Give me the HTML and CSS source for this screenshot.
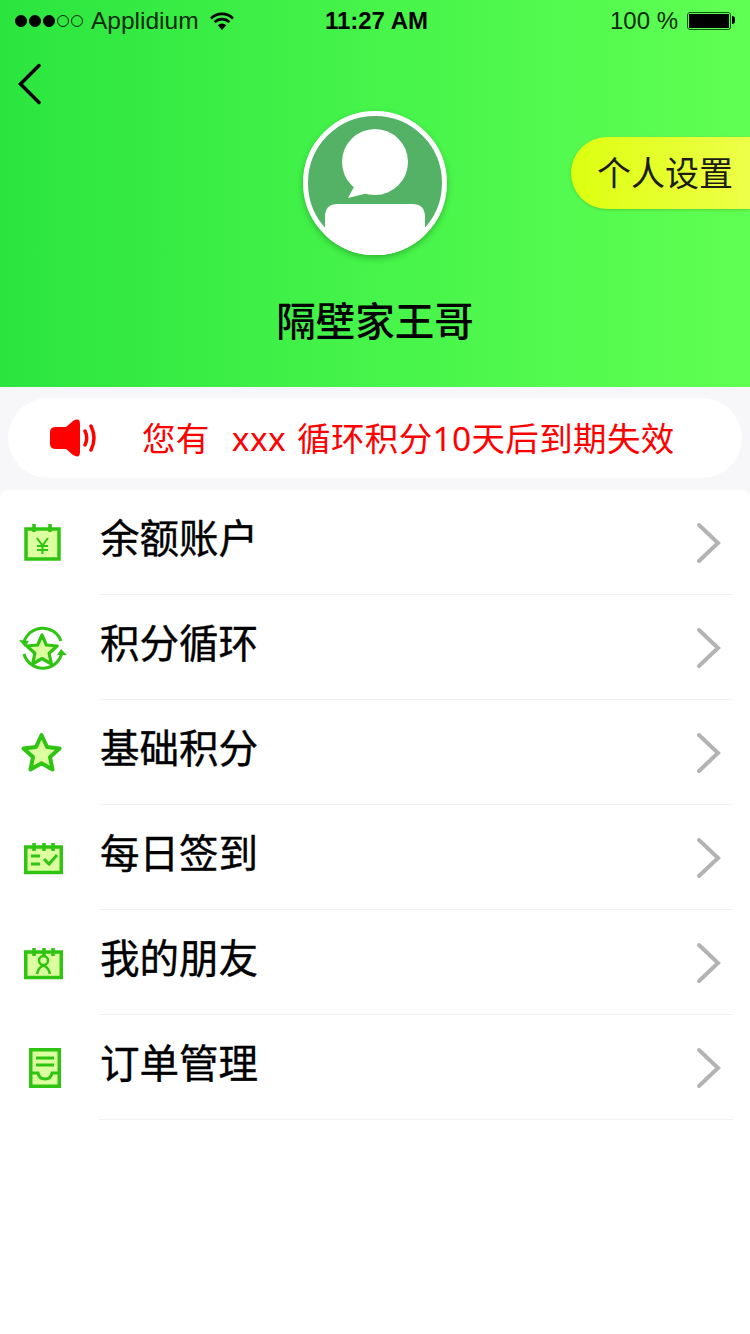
FILE: index.html
```html
<!DOCTYPE html>
<html lang="zh-CN">
<head>
    <meta charset="UTF-8">
    <meta name="viewport" content="width=device-width, initial-scale=1.0">
    <title>个人中心</title>
    <link rel="stylesheet" href="styles.css">
</head>
<body>
    <!-- 顶部 -->
    <header class="top">
        <div class="status">
            <div class="status-left">
                <span class="dots"><i class="on"></i><i class="on"></i><i class="on"></i><i></i><i></i></span>
                <span class="carrier">Applidium</span>
                <svg class="wifi" width="26" height="20" viewBox="0 0 26 20">
                    <path d="M2 7.5a15.5 15.5 0 0 1 22 0M5.6 11.2a10.4 10.4 0 0 1 14.8 0" fill="none" stroke="#000" stroke-width="2.6"/>
                    <path d="M8.8 14.3a5.9 5.9 0 0 1 8.4 0L13 19z" fill="#000"/>
                </svg>
            </div>
            <div class="clock">11:27 AM</div>
            <div class="status-right">
                <span>100 %</span>
                <span class="battery"><i></i></span>
            </div>
        </div>

        <div class="profile">
            <a class="back">
                <svg width="28" height="42" viewBox="0 0 28 42">
                    <path d="M24 2.5L5.5 21 24 39.5" fill="none" stroke="#000" stroke-width="3.5" stroke-linecap="round"/>
                </svg>
            </a>
            <div class="avatar">
                <svg width="144" height="144" viewBox="0 0 144 144">
                    <circle cx="72" cy="72" r="69.5" fill="#54b267" stroke="#fff" stroke-width="5"/>
                    <circle cx="72" cy="51" r="33" fill="#fff"/>
                    <path d="M52 74L45 87l20-5z" fill="#fff"/>
                    <path d="M22 124V106q0-13 13-13h74q13 0 13 13v18A72 72 0 0 1 22 124z" fill="#fff"/>
                </svg>
            </div>
            <a class="settings">个人设置</a>
        </div>

        <h1 class="name">隔壁家王哥</h1>
    </header>

    <!-- 通知 -->
    <div class="notice-wrap">
        <div class="notice">
            <svg width="48" height="38" viewBox="0 0 48 38">
                <path d="M6 8h10L23 2q7-4 7 3v28q0 7-7 3l-7-6H6q-6 0-6-5V13q0-5 6-5z" fill="#f00"/>
                <path d="M35 12q3.5 7 0 14M41 7q6 12 0 24" fill="none" stroke="#f00" stroke-width="3.5" stroke-linecap="round"/>
            </svg>
            <span class="notice-text">您有&nbsp;&nbsp;xxx 循环积分10天后到期失效</span>
        </div>
    </div>

    <!-- 菜单 -->
    <ul class="menu">
        <li class="row">
            <span class="icon">
                <svg width="44" height="44" viewBox="0 0 44 44">
                    <rect x="6" y="9" width="33" height="30" fill="#dcffa0" stroke="#2fc412" stroke-width="3.5"/>
                    <path d="M14 4v8M30 4v8" stroke="#2fc412" stroke-width="3.5"/>
                    <path d="M17 18l5.500 7.500L28 18M22.500 25v9M17 26h11M17 30h11" fill="none" stroke="#2fc412" stroke-width="2"/>
                </svg>
            </span>
            <span class="label">余额账户</span>
            <svg class="arrow" width="28" height="42" viewBox="0 0 28 42"><path d="M3 3l19 18L3 39" fill="none" stroke="#b3b3b3" stroke-width="4" stroke-linecap="round"/></svg>
        </li>
        <li class="row">
            <span class="icon">
                <svg width="50" height="46" viewBox="0 0 50 46">
                    <path d="M7 18A19.500 19.500 0 0 1 44 17M45 28A19.500 19.500 0 0 1 7 30" fill="none" stroke="#2fc412" stroke-width="3"/>
                    <path d="M2 16l6 7 4-6zM50 31l-6-6-4 6z" fill="#2fc412"/>
                    <path d="M25 11l4.400 10 10.800 1-8.100 7.300 2.300 10.700L25 34.500 15.600 40l2.300-10.700L9.800 22l10.800-1z" fill="#dcffa0" stroke="#2fc412" stroke-width="3.200" stroke-linejoin="round"/>
                </svg>
            </span>
            <span class="label">积分循环</span>
            <svg class="arrow" width="28" height="42" viewBox="0 0 28 42"><path d="M3 3l19 18L3 39" fill="none" stroke="#b3b3b3" stroke-width="4" stroke-linecap="round"/></svg>
        </li>
        <li class="row">
            <span class="icon">
                <svg width="44" height="44" viewBox="0 0 44 44">
                    <path d="M21.500 5l5.500 12 12.500 1.500-9.500 8.500 2.500 12.500-11-6.200-11 6.200L13 27l-9.500-8.500L16 17z" fill="#dcffa0" stroke="#2fc412" stroke-width="4" stroke-linejoin="round"/>
                </svg>
            </span>
            <span class="label">基础积分</span>
            <svg class="arrow" width="28" height="42" viewBox="0 0 28 42"><path d="M3 3l19 18L3 39" fill="none" stroke="#b3b3b3" stroke-width="4" stroke-linecap="round"/></svg>
        </li>
        <li class="row">
            <span class="icon">
                <svg width="44" height="44" viewBox="0 0 44 44">
                    <rect x="5.750" y="12" width="35.500" height="25.500" fill="#dcffa0" stroke="#2fc412" stroke-width="3.500"/>
                    <path d="M14 8v8M24 8v8M33 8v8" stroke="#2fc412" stroke-width="3.500"/>
                    <path d="M11 21h9M11 29h9" stroke="#2fc412" stroke-width="3"/>
                    <path d="M24 24l5 5 8-9" fill="none" stroke="#2fc412" stroke-width="3"/>
                </svg>
            </span>
            <span class="label">每日签到</span>
            <svg class="arrow" width="28" height="42" viewBox="0 0 28 42"><path d="M3 3l19 18L3 39" fill="none" stroke="#b3b3b3" stroke-width="4" stroke-linecap="round"/></svg>
        </li>
        <li class="row">
            <span class="icon">
                <svg width="44" height="44" viewBox="0 0 44 44">
                    <rect x="5.750" y="12" width="35.500" height="25.500" fill="#dcffa0" stroke="#2fc412" stroke-width="3.500"/>
                    <path d="M14 8v8M24 8v8M33 8v8" stroke="#2fc412" stroke-width="3.500"/>
                    <circle cx="23.500" cy="20.500" r="4.500" fill="none" stroke="#2fc412" stroke-width="2.500"/>
                    <path d="M17 34q1.500-7 6.500-8.500 5 1.500 6.500 8.500" fill="none" stroke="#2fc412" stroke-width="2.500"/>
                </svg>
            </span>
            <span class="label">我的朋友</span>
            <svg class="arrow" width="28" height="42" viewBox="0 0 28 42"><path d="M3 3l19 18L3 39" fill="none" stroke="#b3b3b3" stroke-width="4" stroke-linecap="round"/></svg>
        </li>
        <li class="row">
            <span class="icon">
                <svg width="44" height="44" viewBox="0 0 44 44">
                    <rect x="10.750" y="4.750" width="28.500" height="36.500" fill="#dcffa0" stroke="#2fc412" stroke-width="3.500"/>
                    <path d="M16 13h18M16 20h18" stroke="#2fc412" stroke-width="3"/>
                    <path d="M10 28h8q1 6 7 6t7-6h8" fill="none" stroke="#2fc412" stroke-width="3"/>
                </svg>
            </span>
            <span class="label">订单管理</span>
            <svg class="arrow" width="28" height="42" viewBox="0 0 28 42"><path d="M3 3l19 18L3 39" fill="none" stroke="#b3b3b3" stroke-width="4" stroke-linecap="round"/></svg>
        </li>
    </ul>
</body>
</html>
```

FILE: styles.css
```css
/* 页面样式 */
body {
    font-family: "Liberation Sans", "Noto Sans CJK SC", sans-serif;
    margin: 0;
    padding: 0;
    width: 750px;
    height: 1334px;
    overflow: hidden;
    background-color: #f7f6f8;
    color: #000;
}

.top {
    height: 387px;
    background: linear-gradient(90deg, #2be53e 0%, #46f44a 50%, #60ff53 100%);
}

.status {
    display: grid;
    grid-template-columns: 1fr auto 1fr;
    align-items: center;
    height: 40px;
    padding: 2px 15px 0;
    box-sizing: border-box;
    font-size: 24.5px;
    color: #0a2a0a;
}

.status-left {
    display: flex;
    align-items: center;
}

.dots {
    display: flex;
    gap: 2px;
    margin-right: 8px;
}

.dots i {
    width: 10px;
    height: 10px;
    border: 1px solid #0a2a0a;
    border-radius: 50%;
}

.dots i.on {
    background-color: #000;
    border-color: #000;
}

.carrier {
    margin-right: 10px;
}

.clock {
    margin-left: 3px;
    font-size: 24px;
    font-weight: bold;
    color: #000;
}

.status-right {
    display: flex;
    align-items: center;
    justify-content: flex-end;
    gap: 9px;
    font-size: 24px;
}

.battery {
    position: relative;
    display: block;
    width: 44px;
    height: 18px;
    padding: 1px;
    box-sizing: border-box;
    border: 1px solid #0a5a10;
    border-radius: 3px;
    margin-right: 4px;
}

.battery i {
    display: block;
    height: 100%;
    background-color: #000;
}

.battery::after {
    content: "";
    position: absolute;
    top: 3px;
    right: -5px;
    width: 3px;
    height: 8px;
    border-radius: 0 3px 3px 0;
    background-color: #000;
}

.profile {
    display: grid;
    grid-template-columns: 1fr 144px 1fr;
    align-items: start;
}

.back {
    display: block;
    margin: 23px 0 0 15px;
    height: 42px;
}

.avatar {
    margin-top: 71px;
    height: 144px;
    border-radius: 50%;
    box-shadow: 0 3px 6px rgba(20, 110, 30, 0.45);
}

.settings {
    justify-self: end;
    width: 179px;
    height: 72px;
    margin-top: 97px;
    padding-left: 26px;
    box-sizing: border-box;
    border-radius: 36px 0 0 36px;
    background: linear-gradient(90deg, #dcff10, #eeff48);
    box-shadow: 0 1px 3px rgba(60, 150, 20, 0.4);
    font-size: 34px;
    line-height: 70px;
    color: #1c1c10;
    font-family: "Noto Sans CJK SC", sans-serif;
}

.name {
    margin: 38px 0 0;
    text-align: center;
    font-size: 39.5px;
    line-height: 52px;
    font-weight: 500;
    font-family: "Noto Sans CJK SC", sans-serif;
}

.notice-wrap {
    height: 103px;
    padding: 11px 8px 0;
    box-sizing: border-box;
}

.notice {
    display: flex;
    align-items: center;
    height: 80px;
    padding-left: 42px;
    border-radius: 40px;
    background-color: #fff;
}

.notice-text {
    margin: 0 0 4px 44px;
    font-size: 33.5px;
    letter-spacing: 0.35px;
    word-spacing: 2px;
    color: #f00;
    white-space: nowrap;
    font-family: "Noto Sans", "Noto Sans CJK SC", sans-serif;
}

.menu {
    list-style: none;
    margin: 0;
    padding: 0;
    height: 844px;
    background-color: #fff;
    border-radius: 8px 8px 0 0;
}

.row {
    display: flex;
    align-items: center;
    height: 105px;
    position: relative;
}

.row::after {
    content: "";
    position: absolute;
    left: 99px;
    right: 17px;
    bottom: 0;
    height: 1px;
    background-color: #f2f2f2;
}

.icon {
    display: flex;
    justify-content: center;
    width: 84px;
    margin: 0 16px 2px 0;
}

.label {
    flex: 1;
    padding-bottom: 14px;
    font-size: 39.5px;
    line-height: 60px;
    font-family: "Noto Sans CJK SC", sans-serif;
    -webkit-text-stroke: 0.4px #000;
    color: #000;
}

.arrow {
    margin-right: 26px;
}
```
